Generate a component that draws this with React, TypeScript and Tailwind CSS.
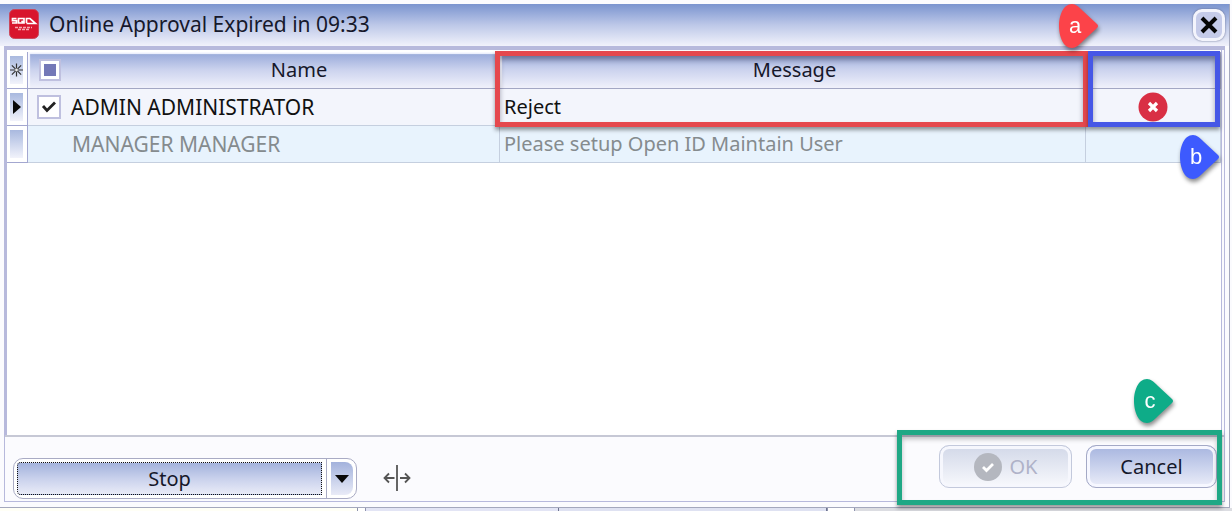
import React from "react";

type PinProps = { label: string; fill: string; className: string };

function Pin({ label, fill, className }: PinProps) {
  return (
    <span
      className={`absolute z-20 flex h-11 w-10 items-center text-white drop-shadow-[1px_3px_2px_rgba(0,0,0,0.45)] ${className}`}
    >
      <svg viewBox="0 0 40 44" className="absolute inset-0 h-full w-full" aria-hidden="true">
        <path
          fill={fill}
          d="M13 0C17 0 20 3 24 7L38 20Q40 22 38 24L24 37C20 41 17 44 13 44C4 44 0 32 0 22C0 12 4 0 13 0Z"
        />
      </svg>
      <span className="relative w-8 text-center font-['Liberation_Sans',sans-serif] text-[22px] leading-none">{label}</span>
    </span>
  );
}

function AppLogo() {
  return (
    <svg viewBox="0 0 30 30" className="h-[30px] w-[30px] shrink-0" aria-hidden="true">
      <rect x="0.5" y="0.5" width="29" height="29" rx="5" fill="#d8152d" stroke="#c9485c" />
      <g fill="none" stroke="#fff" strokeWidth="1.7">
        <path d="M7.500 9.500H3.500v2.200h4V14H3M9.500 9.500h5.500V14H9.500zM12.500 12l3 2M17.500 14V9.500h3.500l5.500 5h-9" />
      </g>
      <path d="M6 18.500h17M9 20.500h11" stroke="#f7a8b0" strokeWidth="1.400" strokeDasharray="3 1" />
    </svg>
  );
}

function RowHandle({ children }: { children?: React.ReactNode }) {
  return (
    <div className="h-9 bg-white p-1 pl-[3px]">
      <div className="flex h-full items-center justify-center bg-linear-to-b from-[#a9b9df] to-[#f2f3fb]">{children}</div>
    </div>
  );
}

const headCell =
  "relative h-9 border-r border-b border-[#a3a7c4] bg-linear-to-b from-[#95a7d8] via-[#ccd3ee] to-[#f0f1fb] p-0 font-normal shadow-[inset_2px_2px_1px_#f7f8ff]";
const cell = "h-9 border-r border-b border-[#c5cfdf] p-0";
const handleCell = "border-r border-b border-[#a3a7d0] p-0";
const callout = "pointer-events-none absolute z-10 border-[5px] shadow-[0_3px_4px_rgba(0,0,0,0.4),inset_0_4px_5px_rgba(30,30,60,0.4)]";

export default function App() {
  return (
    <div className="flex h-screen min-h-96 flex-col overflow-hidden bg-[#fbfbfe] pt-1 font-['Noto_Sans','Open_Sans',sans-serif] text-xl leading-6 text-[#16182b]">
      <main className="mr-0.5 flex flex-1 flex-col border-r border-b border-[#a4a8bd]">
        <header className="relative flex h-[42px] items-center justify-between bg-linear-to-b from-[#7b94cf] via-[#bdc8e8] to-[#f1f2fb] pr-1 pl-[9px]">
          <div className="flex items-center gap-2.5 pb-0.5">
            <AppLogo />
            <h1 className="text-[21px]">Online Approval Expired in 09:33</h1>
          </div>
          <button
            type="button"
            aria-label="Close"
            className="flex h-8 w-8 items-center justify-center rounded-[9px] border-[3px] border-[#f3f4fc] bg-[#c5cbe9] shadow-[0_0_2px_#596287]"
          >
            <svg viewBox="0 0 18 18" className="h-[18px] w-[18px]" aria-hidden="true">
              <path d="M2 2L16 16M16 2L2 16" stroke="#050505" strokeWidth="4" />
            </svg>
          </button>
          <Pin label="a" fill="#fc4349" className="top-0 right-[130px]" />
        </header>

        <div className="mr-1 ml-1 mb-[5px] flex flex-1 flex-col border-t-4 border-r border-b border-l border-[#b7b9dc]">
          <section className="mr-0.5 flex-1 border-r border-l-2 border-[#b7b9dc] bg-white pt-0.5">
            <table className="w-full table-fixed border-separate border-spacing-0">
              <colgroup>
                <col className="w-[21px]" />
                <col className="w-[472px]" />
                <col />
                <col className="w-[135px]" />
              </colgroup>
              <thead>
                <tr>
                  <th className={handleCell}>
                    <RowHandle>
                      <svg viewBox="0 0 14 14" className="h-3.5 w-3.5" aria-hidden="true">
                        <path d="M7 0V14M0 7H14M2 2L12 12M12 2L2 12" stroke="#333" strokeWidth="1.300" />
                        <circle cx="7" cy="7" r="1.500" fill="#eee" />
                      </svg>
                    </RowHandle>
                  </th>
                  <th className={headCell}>
                    <div className="flex items-center pl-[11px]">
                      <label className="relative flex h-[22px] w-[22px] items-center justify-center border-2 border-[#bfc0df] bg-white">
                        <input type="checkbox" aria-label="Select all" className="absolute inset-0 appearance-none" />
                        <span className="h-3 w-3 bg-[#7479b7]" />
                      </label>
                      <span className="flex-1 pl-[38px]">Name</span>
                    </div>
                  </th>
                  <th className={headCell}>
                    <div className="pl-1">Message</div>
                    <span className={`${callout} -top-px -right-[3px] -left-[5px] h-[76px] border-[#e5484d]`} />
                  </th>
                  <th className={headCell} aria-label="Status">
                    <span className={`${callout} -top-px right-0 left-0.5 h-[76px] border-[#4657e6]`} />
                    <Pin label="b" fill="#3d5afe" className="top-[83px] right-0" />
                  </th>
                </tr>
              </thead>
              <tbody>
                <tr className="bg-[#f3f5fc] text-[#111]">
                  <td className={handleCell}>
                    <RowHandle>
                      <svg viewBox="0 0 8 14" className="h-3.5 w-2" aria-hidden="true">
                        <path d="M0 0L8 7L0 14Z" fill="#080808" />
                      </svg>
                    </RowHandle>
                  </td>
                  <td className={cell}>
                    <label className="flex items-center gap-2.5 pl-[9px]">
                      <span className="relative flex h-6 w-6 items-center justify-center border-2 border-[#bfc0df] bg-white">
                        <input type="checkbox" defaultChecked className="absolute inset-0 appearance-none" />
                        <svg viewBox="0 0 16 14" className="h-3.5 w-4" aria-hidden="true">
                          <path d="M2 6L6 10.500L14 2.500" fill="none" stroke="#222" strokeWidth="2.800" />
                        </svg>
                      </span>
                      <span className="text-[21px]">ADMIN ADMINISTRATOR</span>
                    </label>
                  </td>
                  <td className={`${cell} pl-1`}>Reject</td>
                  <td className={cell}>
                    <svg viewBox="0 0 30 30" className="mx-auto h-[30px] w-[30px]" role="img" aria-label="Rejected">
                      <circle cx="15" cy="15" r="14.500" fill="#d92f44" />
                      <path d="M11 11L19 19M19 11L11 19" stroke="#fff" strokeWidth="3.200" />
                    </svg>
                  </td>
                </tr>
                <tr className="bg-[#e8f3fd] text-[#858b8e]">
                  <td className={handleCell}>
                    <RowHandle />
                  </td>
                  <td className={`${cell} pl-11 text-[21px]`}>MANAGER MANAGER</td>
                  <td className={`${cell} pl-1`}>Please setup Open ID Maintain User</td>
                  <td className={cell} />
                </tr>
              </tbody>
            </table>
          </section>

          <footer className="flex h-[66px] items-stretch justify-between border-t-2 border-[#c6c8d5] bg-[#fbfbfe]">
            <div className="flex items-end gap-[26px] pb-0.5 pl-2">
              <div className="flex h-[41px] w-[344px] rounded-[10px] border border-[#a9abc4] bg-white p-[3px]">
                <button
                  type="button"
                  className="flex-1 rounded-l border border-dotted border-[#111] bg-linear-to-b from-[#a3b2dc] via-[#c9d1ec] to-[#e9ebf7]"
                >
                  Stop
                </button>
                <span className="mx-1 my-[-3px] w-px bg-[#a9abc4]" />
                <button
                  type="button"
                  aria-label="More stop options"
                  className="flex w-[22px] items-center justify-center rounded-r-lg bg-linear-to-b from-[#a3b2dc] to-[#e9ebf7]"
                >
                  <svg viewBox="0 0 14 8" className="h-2 w-3.5" aria-hidden="true">
                    <path d="M0 0H14L7 8Z" fill="#080808" />
                  </svg>
                </button>
              </div>
              <svg viewBox="0 0 28 26" className="mb-2 h-[26px] w-7" aria-label="Resize" role="img">
                <path
                  d="M14 0V26M2 13H11.500M17 13H26M6 8.500L1.500 13L6 17.500M22 8.500L26.500 13L22 17.500"
                  fill="none"
                  stroke="#555"
                  strokeWidth="1.800"
                />
              </svg>
            </div>
            <div className="relative flex gap-3.5 pt-2 pr-[7px] pl-[42px]">
              <button
                type="button"
                disabled
                className="flex h-[43px] w-[133px] items-center justify-center gap-2 rounded-[10px] border border-[#c3c9dc] bg-linear-to-b from-[#d2d8e8] to-[#f8f9fd] text-[#afb2c8] shadow-[inset_0_0_0_3px_#f6f7fd]"
              >
                <svg viewBox="0 0 28 28" className="h-7 w-7" aria-hidden="true">
                  <circle cx="14" cy="14" r="14" fill="#b4b7bf" />
                  <path d="M9 14L12.500 17.500L19 11" fill="none" stroke="#fff" strokeWidth="2.800" />
                </svg>
                OK
              </button>
              <button
                type="button"
                className="h-[43px] w-[131px] rounded-[10px] border border-[#a4a9c6] bg-linear-to-b from-[#a7b5df] to-[#eceef9] shadow-[inset_0_0_0_3px_#f6f7ff]"
              >
                Cancel
              </button>
              <span className="pointer-events-none absolute -top-[7px] right-0.5 -bottom-1 left-0 border-[5px] border-[#1fa885] shadow-[0_3px_4px_rgba(0,0,0,0.4),inset_0_4px_5px_rgba(0,0,0,0.25)]" />
              <Pin label="c" fill="#0eac88" className="-top-[58px] right-[50px]" />
            </div>
          </footer>
        </div>
      </main>
      <div className="flex h-[3px] shrink-0">
        <span className="w-[358px] border-r border-[#8e93ae] bg-[#fffff6]" />
        <span className="w-2 border-r border-[#8e93ae] bg-white" />
        <span className="w-[193px] border-r border-[#6e748e] bg-[#e3e5f5]" />
        <span className="w-[268px] border-r border-[#6e748e] bg-[#dfe2f2]" />
        <span className="w-7 border-x border-[#8e93ae] bg-white" />
        <span className="flex-1 bg-[#dcdde2]" />
      </div>
    </div>
  );
}
